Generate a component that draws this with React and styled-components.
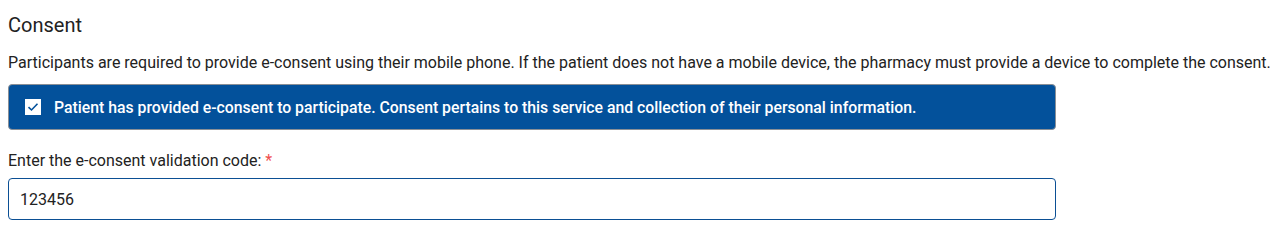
import React from 'react';
import styled, { createGlobalStyle } from 'styled-components';

const GlobalStyle = createGlobalStyle`
  body {
    margin: 0;
    background: #fff;
    font-family: Roboto, "Liberation Sans", sans-serif;
    color: #222;
  }
`;

const Section = styled.section`
  padding: 12px 8px 0;
`;

const Title = styled.h2`
  margin: 0;
  font-size: 20px;
  font-weight: 400;
  line-height: 26px;
  color: #222;
`;

const Intro = styled.p`
  margin: 14px 0 0;
  font-size: 16px;
  line-height: 22px;
  color: #222;
`;

const ConsentBanner = styled.label`
  display: flex;
  align-items: center;
  gap: 13px;
  box-sizing: border-box;
  width: 1048px;
  height: 46px;
  margin-top: 10px;
  padding: 0 16px;
  background: #03519b;
  border: 1px solid #8a8f96;
  border-radius: 4px;
  color: #fff;
  font-size: 15.8px;
  font-weight: 500;
  cursor: pointer;
`;

const Box = styled.span`
  display: flex;
  align-items: center;
  justify-content: center;
  width: 16px;
  height: 16px;
  background: #fff;
  flex-shrink: 0;
`;

const FieldLabel = styled.div`
  margin-top: 20px;
  font-size: 16px;
  line-height: 22px;
  color: #222;
`;

const Required = styled.span`
  color: #f0504f;
`;

const CodeInput = styled.input`
  display: block;
  box-sizing: border-box;
  width: 1048px;
  height: 42px;
  margin-top: 6px;
  padding: 0 11px;
  border: 1px solid #0b4f94;
  border-radius: 4px;
  font-family: Roboto, "Liberation Sans", sans-serif;
  font-size: 16px;
  color: #222;
  outline: none;
`;

const Check = () => (
  <svg width="12" height="10" viewBox="0 0 12 10">
    <path d="M1.5 5.2 L4.5 8 L10.5 1.8" fill="none" stroke="#03519b" strokeWidth="1.6" />
  </svg>
);

export default function App() {
  return (
    <>
      <GlobalStyle />
      <Section>
        <Title>Consent</Title>
        <Intro>
          Participants are required to provide e-consent using their mobile phone. If the patient does not have a mobile device, the pharmacy must provide a device to complete the consent.
        </Intro>
        <ConsentBanner>
          <Box><Check /></Box>
          Patient has provided e-consent to participate. Consent pertains to this service and collection of their personal information.
        </ConsentBanner>
        <FieldLabel>
          Enter the e-consent validation code: <Required>*</Required>
        </FieldLabel>
        <CodeInput defaultValue="123456" />
      </Section>
    </>
  );
}
